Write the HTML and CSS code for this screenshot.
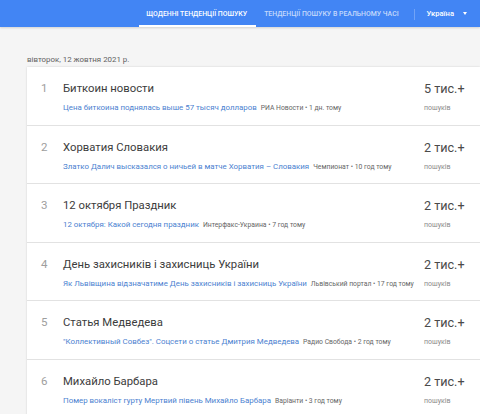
FILE: index.html
```html
<!DOCTYPE html>
<html lang="uk">
<head>
  <meta charset="UTF-8" />
  <meta name="viewport" content="width=device-width, initial-scale=1.0"/>
  <title>Google Trends</title>
  <link rel="stylesheet" href="styles.css">
</head>
<body>

  <header class="topbar">
    <nav class="tabs">
      <a class="tab active">Щоденні тенденції пошуку</a>
      <a class="tab">Тенденції пошуку в реальному часі</a>
    </nav>
    <div class="geo">
      <span>Україна</span>
      <span class="caret"></span>
    </div>
  </header>

  <main>
    <p class="date">вівторок, 12 жовтня 2021 р.</p>

    <ul class="feed">
      <li class="item">
        <span class="rank">1</span>
        <div class="details">
          <div class="title">Биткоин новости</div>
          <div class="summary">
            <a class="link">Цена биткоина поднялась выше 57 тысяч долларов</a>
            <span class="source">РИА Новости • 1 дн. тому</span>
          </div>
        </div>
        <div class="volume">
          <div class="count">5 тис.+</div>
          <div class="unit">пошуків</div>
        </div>
      </li>
      <li class="item">
        <span class="rank">2</span>
        <div class="details">
          <div class="title">Хорватия Словакия</div>
          <div class="summary">
            <a class="link">Златко Далич высказался о ничьей в матче Хорватия – Словакия</a>
            <span class="source">Чемпионат • 10 год тому</span>
          </div>
        </div>
        <div class="volume">
          <div class="count">2 тис.+</div>
          <div class="unit">пошуків</div>
        </div>
      </li>
      <li class="item">
        <span class="rank">3</span>
        <div class="details">
          <div class="title">12 октября Праздник</div>
          <div class="summary">
            <a class="link">12 октября: Какой сегодня праздник</a>
            <span class="source">Интерфакс-Украина • 7 год тому</span>
          </div>
        </div>
        <div class="volume">
          <div class="count">2 тис.+</div>
          <div class="unit">пошуків</div>
        </div>
      </li>
      <li class="item">
        <span class="rank">4</span>
        <div class="details">
          <div class="title">День захисників і захисниць України</div>
          <div class="summary">
            <a class="link">Як Львівщина відзначатиме День захисників і захисниць України</a>
            <span class="source">Львівський портал • 17 год тому</span>
          </div>
        </div>
        <div class="volume">
          <div class="count">2 тис.+</div>
          <div class="unit">пошуків</div>
        </div>
      </li>
      <li class="item">
        <span class="rank">5</span>
        <div class="details">
          <div class="title">Статья Медведева</div>
          <div class="summary">
            <a class="link">"Коллективный Совбез". Соцсети о статье Дмитрия Медведева</a>
            <span class="source">Радио Свобода • 2 год тому</span>
          </div>
        </div>
        <div class="volume">
          <div class="count">2 тис.+</div>
          <div class="unit">пошуків</div>
        </div>
      </li>
      <li class="item">
        <span class="rank">6</span>
        <div class="details">
          <div class="title">Михайло Барбара</div>
          <div class="summary">
            <a class="link">Помер вокаліст гурту Мертвий півень Михайло Барбара</a>
            <span class="source">Варіанти • 3 год тому</span>
          </div>
        </div>
        <div class="volume">
          <div class="count">2 тис.+</div>
          <div class="unit">пошуків</div>
        </div>
      </li>
    </ul>
  </main>

</body>
</html>
```

FILE: styles.css
```css
:root {
  --blue: #4285f4;
  --link: #4b7fd0;
  --text: #333;
  --muted: #8a8a8a;
  --bg: #f5f5f5;
}

body {
  margin: 0;
  font-family: Roboto, 'Noto Sans', sans-serif;
  background: var(--bg);
  color: var(--text);
  overflow: hidden;
}

.topbar {
  display: flex;
  justify-content: flex-end;
  align-items: stretch;
  height: 27px;
  background: var(--blue);
  padding-right: 13px;
  box-shadow: 0 1px 2px rgba(0, 0, 0, 0.15);
}

.tabs {
  display: flex;
}

.tab {
  display: flex;
  align-items: center;
  padding: 0 8px;
  font-size: 6.9px;
  font-weight: 500;
  text-transform: uppercase;
  color: rgba(255, 255, 255, 0.7);
  border-bottom: 2px solid transparent;
  box-sizing: border-box;
  margin-top: 2px;
}

.tab.active {
  color: #fff;
  border-bottom-color: #fff;
  padding: 0 9px 0 7px;
}

.geo {
  display: flex;
  align-items: center;
  gap: 9px;
  margin-left: 7px;
  padding-left: 13px;
  font-size: 7.6px;
  font-weight: 500;
  color: #fff;
  position: relative;
}

.geo::before {
  content: '';
  position: absolute;
  left: 0;
  top: 9px;
  height: 11px;
  border-left: 1px solid rgba(255, 255, 255, 0.25);
}

.caret {
  width: 0;
  height: 0;
  border-left: 2.5px solid transparent;
  border-right: 2.5px solid transparent;
  border-top: 3px solid #fff;
}

main {
  padding-left: 27px;
}

.date {
  margin: 27px 0 0;
  font-size: 7.9px;
  color: #616161;
  line-height: 12px;
}

.feed {
  list-style: none;
  margin: 1px 0 0;
  padding: 0;
  background: #fff;
  box-shadow: 0 0 2px rgba(0, 0, 0, 0.15);
}

.item {
  display: flex;
  align-items: flex-start;
  height: 58.5px;
  box-sizing: border-box;
  padding-top: 14px;
  border-bottom: 1px solid #e2e2e2;
}

.rank {
  width: 22px;
  padding-left: 14px;
  font-size: 11.5px;
  color: #9e9e9e;
  line-height: 15px;
}

.details {
  flex: 1;
  min-width: 0;
}

.title {
  font-size: 11.3px;
  line-height: 15px;
  color: #3c3c3c;
}

.summary {
  margin-top: 7px;
  font-size: 7.9px;
  white-space: nowrap;
}

.link {
  color: var(--link);
}

.source {
  margin-left: 2px;
  font-size: 6.8px;
  color: #666;
}

.volume {
  width: 56px;
}

.count {
  font-size: 12.6px;
  line-height: 15px;
  color: #4a4a4a;
}

.unit {
  margin-top: 8px;
  font-size: 7px;
  color: var(--muted);
}
```
